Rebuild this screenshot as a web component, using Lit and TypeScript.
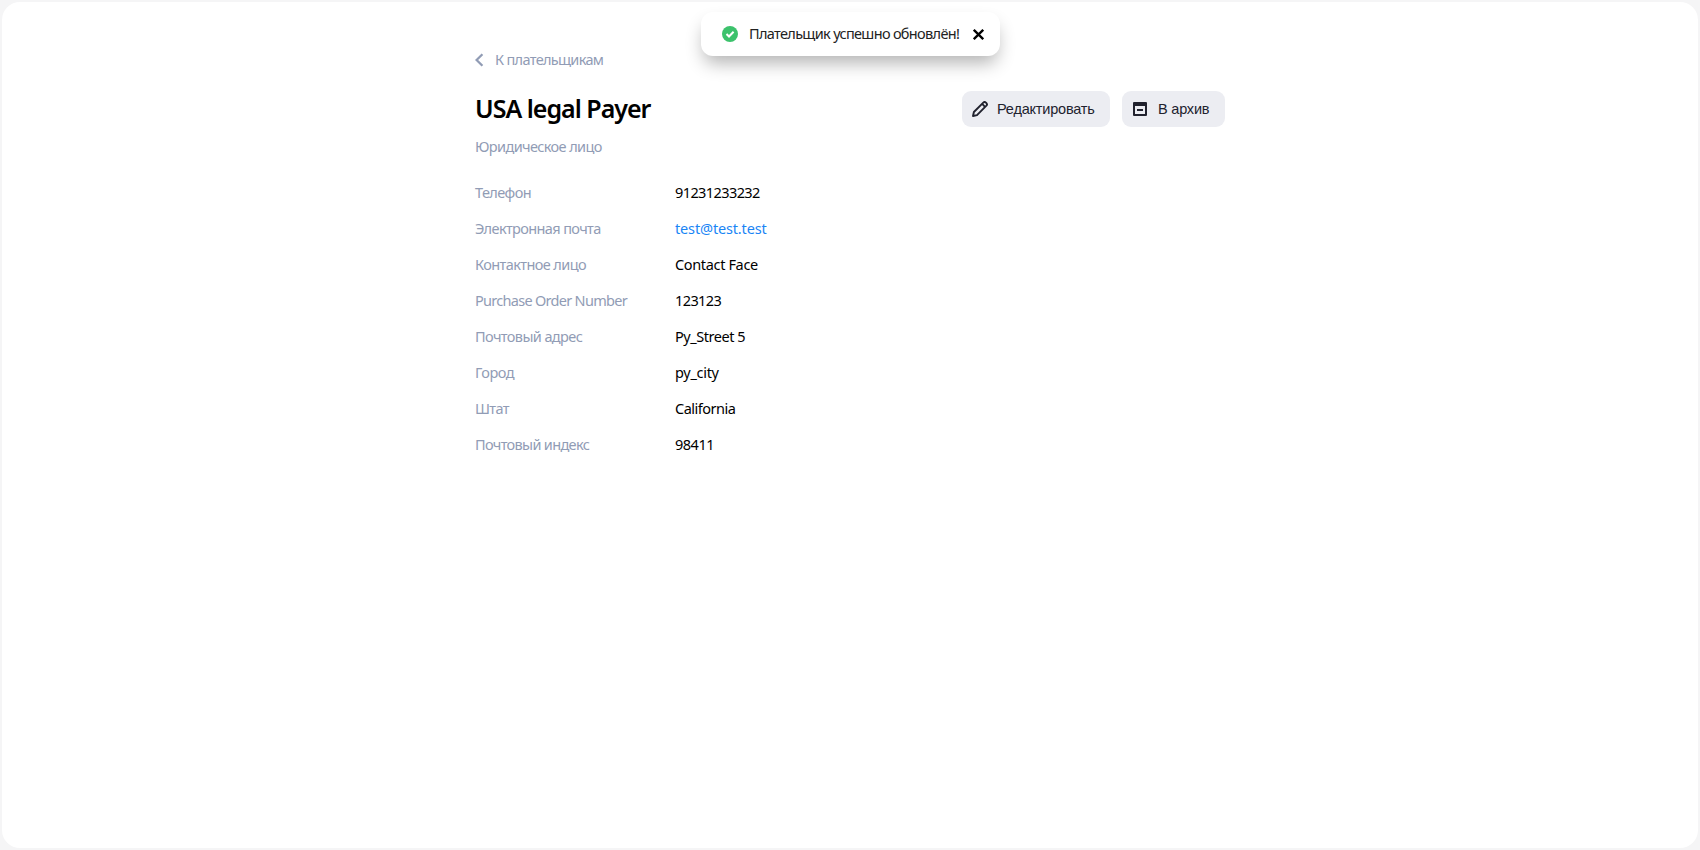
import { LitElement, html, css } from "lit";
import { customElement } from "lit/decorators.js";
import { styleMap } from "lit/directives/style-map.js";

interface Field {
  label: string;
  value: string;
  link?: boolean;
  ls: number;
  vs: number;
}

const FIELDS: Field[] = [
  { label: "Телефон", value: "91231233232", ls: -0.6, vs: -0.59 },
  { label: "Электронная почта", value: "test@test.test", link: true, ls: -0.62, vs: -0.15 },
  { label: "Контактное лицо", value: "Contact Face", ls: -0.59, vs: -0.35 },
  { label: "Purchase Order Number", value: "123123", ls: -0.71, vs: -0.6 },
  { label: "Почтовый адрес", value: "Py_Street 5", ls: -0.6, vs: -0.45 },
  { label: "Город", value: "py_city", ls: -0.5, vs: -0.3 },
  { label: "Штат", value: "California", ls: -0.65, vs: -0.5 },
  { label: "Почтовый индекс", value: "98411", ls: -0.66, vs: -0.5 },
];

const spacing = (px: number) => styleMap({ letterSpacing: `${px}px` });

@customElement("app-root")
export class AppRoot extends LitElement {
  static styles = css`
    :host {
      display: block;
      box-sizing: border-box;
      height: 100vh;
      padding: 2px;
      background: #f5f5f6;
      font: 14.5px/20px "Noto Sans", sans-serif;
      letter-spacing: -0.62px;
      color: #000;
    }
    .page { box-sizing: border-box; height: 100%; padding-top: 47px; border-radius: 18px; background: #fff; }
    .content { width: 750px; margin: 0 auto; white-space: nowrap; }
    .back { display: flex; align-items: center; gap: 11px; height: 20px; color: #919cb5; text-decoration: none; letter-spacing: -0.67px; }
    .back svg { width: 9px; height: 14px; margin-top: 2px; }
    .head { display: flex; align-items: center; gap: 12px; height: 36px; margin-top: 22px; }
    h1 { flex: 1; margin: 0; padding-bottom: 2px; font-size: 25px; line-height: 32px; font-weight: 600; letter-spacing: -1px; }
    button { border: 0; margin: 0; background: #ecedf2; color: #21222e; }
    .action {
      display: flex; align-items: center; height: 36px; padding: 0 0 0 10px; border-radius: 9px;
      font: 14.5px/20px "Liberation Sans", sans-serif; letter-spacing: -0.2px;
    }
    .edit { width: 148px; gap: 9px; }
    .archive { width: 103px; gap: 10px; }
    .action svg { width: 16px; height: 16px; }
    .kind { margin-top: 9px; color: #919cb5; }
    .fields { display: grid; grid-template-columns: 200px 1fr; row-gap: 16px; margin: 26px 0 0; }
    dt { color: #919cb5; }
    dd { margin: 0; }
    a.mail { color: #1a85f5; text-decoration: none; }
    .toast {
      position: absolute; top: 12px; left: 701px; width: 299px; height: 44px; box-sizing: border-box;
      display: flex; align-items: center; padding: 0 16px 0 21px; border-radius: 12px;
      background: #fff; color: #222; white-space: nowrap; box-shadow: 0 10px 18px -3px rgba(0, 0, 0, 0.3);
    }
    .ok { width: 16px; height: 16px; margin-right: 11px; }
    .message { flex: 1; margin-top: -2px; letter-spacing: -0.67px; }
    .close { display: flex; padding: 0; background: none; }
    .close svg { width: 11px; height: 11px; }
  `;

  render() {
    return html`
      <main class="page">
        <div class="content">
          <a class="back">
            <svg viewBox="0 0 9 14" fill="none" stroke="currentColor" stroke-width="2.3"><path d="M7.4 1.2 1.6 7l5.8 5.8" /></svg>
            <span>К плательщикам</span>
          </a>
          <header class="head">
            <h1>USA legal Payer</h1>
            <button class="action edit">
              <svg viewBox="0 0 16 16" fill="none" stroke="currentColor" stroke-width="1.9" stroke-linejoin="round">
                <path d="M1 15l.9-4 9.4-9.4a1.9 1.9 0 0 1 2.6 0l.5.5a1.9 1.9 0 0 1 0 2.6L5 14.1zM10.4 3.2l2.4 2.4" />
              </svg>
              <span>Редактировать</span>
            </button>
            <button class="action archive">
              <svg viewBox="0 0 16 16" fill="currentColor">
                <path fill-rule="evenodd" d="M2 1h12a1 1 0 0 1 1 1v12a1 1 0 0 1-1 1H2a1 1 0 0 1-1-1V2a1 1 0 0 1 1-1zm1 4v8h10V5zM5 8h6v2H5z" />
              </svg>
              <span>В архив</span>
            </button>
          </header>
          <div class="kind">Юридическое лицо</div>
          <dl class="fields">
            ${FIELDS.map(
              (f) => html`
                <dt><span style=${spacing(f.ls)}>${f.label}</span></dt>
                <dd>${f.link
                  ? html`<a class="mail" style=${spacing(f.vs)} href="mailto:${f.value}">${f.value}</a>`
                  : html`<span style=${spacing(f.vs)}>${f.value}</span>`}</dd>
              `
            )}
          </dl>
        </div>
      </main>
      <div class="toast" role="status">
        <svg class="ok" viewBox="0 0 16 16"><circle cx="8" cy="8" r="8" fill="#3cc26c" /><path d="m4.5 8 2.5 2.5 4.6-4.8" fill="none" stroke="#fff" stroke-width="2" /></svg>
        <span class="message">Плательщик успешно обновлён!</span>
        <button class="close" aria-label="Закрыть"><svg viewBox="0 0 11 11" stroke="#000" stroke-width="2.3"><path d="m.8.8 9.4 9.4M10.2.8.8 10.2" /></svg></button>
      </div>
    `;
  }
}
